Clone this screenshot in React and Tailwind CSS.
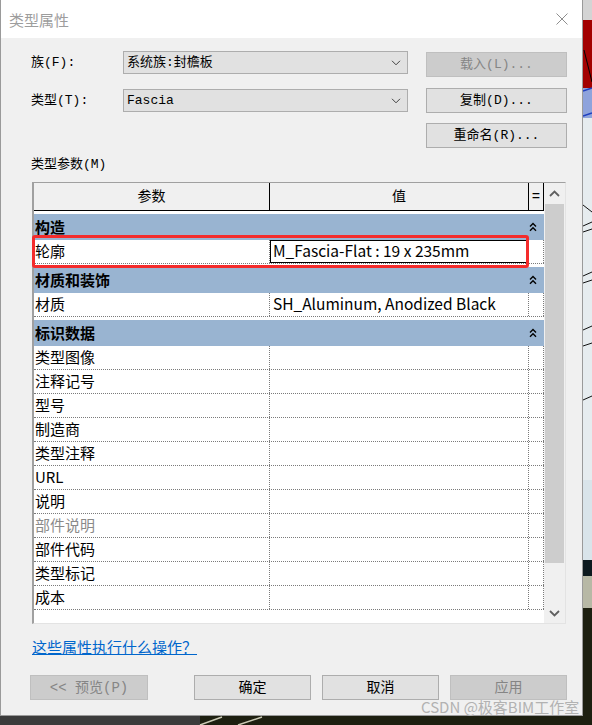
import React from "react";

const ui = "font-['Liberation_Mono','Noto_Sans_CJK_SC',monospace] text-[13px]";
const grid = "font-['Noto_Sans_CJK_SC',sans-serif] text-[15px]";

const dataRows = [
  { label: "类型图像" },
  { label: "注释记号" },
  { label: "型号" },
  { label: "制造商" },
  { label: "类型注释" },
  { label: "URL" },
  { label: "说明" },
  { label: "部件说明", muted: true },
  { label: "部件代码" },
  { label: "类型标记" },
  { label: "成本" },
];

function DownChevron() {
  return (
    <svg width="10" height="6" viewBox="0 0 10 6">
      <path d="M1 0.8 L5 4.8 L9 0.8" fill="none" stroke="#404040" strokeWidth="1" />
    </svg>
  );
}

function Combo({ value, className = "" }) {
  return (
    <div className={`w-[285px] h-[23px] bg-[#e1e1e1] border border-[#adadad] flex items-center pl-[3px] pr-[6px] ${className}`}>
      <span className="flex-1 text-black leading-none">{value}</span>
      <DownChevron />
    </div>
  );
}

function Btn({ children, disabled, className = "" }) {
  return (
    <button
      type="button"
      className={`h-[25px] flex items-center justify-center border leading-none ${
        disabled
          ? "bg-[#cccccc] border-[#bfbfbf] text-[#858585]"
          : "bg-[#e1e1e1] border-[#adadad] text-black"
      } ${className}`}
    >
      {children}
    </button>
  );
}

function DoubleUp() {
  return (
    <svg width="8" height="10" viewBox="0 0 8 10">
      <path d="M1 4.5 L4 1.5 L7 4.5 M1 8.8 L4 5.8 L7 8.8" fill="none" stroke="#000" strokeWidth="1.4" />
    </svg>
  );
}

function ScrollArrow({ up }) {
  return (
    <svg width="11" height="7" viewBox="0 0 11 7">
      <path
        d={up ? "M1 6 L5.5 1.5 L10 6" : "M1 1 L5.5 5.5 L10 1"}
        fill="none"
        stroke="#606060"
        strokeWidth="1.8"
      />
    </svg>
  );
}

function GroupRow({ label }) {
  return (
    <div className="pt-[3px] bg-white">
      <div className="h-[26px] bg-[#99b4d1] flex items-center justify-between pl-[1px] pr-[7px]">
        <span className="font-bold text-black leading-none pb-[2px]">{label}</span>
        <DoubleUp />
      </div>
    </div>
  );
}

function DataRow({ label, value, muted, editing }) {
  return (
    <div className="h-[24px] flex border-b border-dotted border-[#7a7a7a]">
      <div className={`w-[235px] flex items-center pl-[1px] pb-[2px] leading-none ${muted ? "text-[#8a8a8a]" : "text-black"}`}>
        {label}
      </div>
      <div className="w-[259px] flex border-l border-dotted border-[#7a7a7a]">
        {editing ? (
          <div className="flex-1 border border-black flex items-center pl-[2px] pb-[1px] leading-none text-black text-[15.5px]">{value}</div>
        ) : (
          <div className="flex-1 flex items-center pl-[3px] pb-[2px] leading-none text-black text-[15.5px]">{value}</div>
        )}
      </div>
      <div className="w-[16px] border-l border-r border-dotted border-[#7a7a7a]" />
    </div>
  );
}

function RightScene() {
  return (
    <svg width="9" height="716" viewBox="0 0 9 716" className="block shrink-0">
      <rect x="0" y="0" width="9" height="20" fill="#d4d4d4" />
      <rect x="0" y="20" width="9" height="68" fill="#a30000" />
      <path d="M1 50 L9 82" stroke="#000" strokeWidth="1" />
      <rect x="0" y="88" width="9" height="30" fill="#8ea3dc" />
      <path d="M0 91 L9 88 M0 116 L9 113" stroke="#1f3fbf" strokeWidth="1.5" />
      <rect x="0" y="118" width="9" height="362" fill="#e6ecef" />
      <rect x="0" y="480" width="9" height="80" fill="#d9e4ea" />
      <path
        d="M0 205 L9 212 M0 226 L9 222 M0 232 L9 229 M0 276 L9 272 M0 283 L9 280 M0 330 L9 326 M0 346 L9 343 M0 400 L9 396 M2 650 L9 640"
        stroke="#111"
        strokeWidth="1"
        fill="none"
      />
      <rect x="0" y="560" width="9" height="16" fill="#0d1a1f" />
      <rect x="0" y="576" width="9" height="32" fill="#b7b8a5" />
      <rect x="0" y="608" width="9" height="108" fill="#1d1f10" />
    </svg>
  );
}

function BottomScene() {
  return (
    <svg width="592" height="9" viewBox="0 0 592 9" className="block">
      <rect x="0" y="0" width="592" height="9" fill="#1d1f10" />
      <rect x="0" y="0" width="200" height="9" fill="#3b3b3b" />
      <path d="M200 9 L222 1 M238 9 L262 1" stroke="#c9c9b4" strokeWidth="1.5" />
    </svg>
  );
}

export default function App() {
  return (
    <div className="w-[592px] h-[725px] bg-[#1d1f10] flex flex-col relative overflow-hidden">
      <div className="flex h-[716px]">
        {/* dialog */}
        <div className={`w-[583px] h-[716px] bg-[#f0f0f0] border-l border-r border-b border-[#9a9a9a] flex flex-col ${ui}`}>
          {/* title bar */}
          <div className="h-[38px] bg-white flex items-center justify-between pl-[8px] pr-[14px] shrink-0">
            <span className="font-['Noto_Sans_CJK_SC',sans-serif] text-[15px] text-[#9d9d9d] leading-none">类型属性</span>
            <svg width="12" height="12" viewBox="0 0 12 12">
              <path d="M0.5 0.5 L11.5 11.5 M11.5 0.5 L0.5 11.5" stroke="#8e8e8e" strokeWidth="1" />
            </svg>
          </div>

          {/* family row */}
          <div className="mt-[13px] flex items-start pl-[30px]">
            <div className="w-[92px] h-[23px] flex items-center leading-none text-black">族(F):</div>
            <Combo value="系统族:封檐板" />
            <Btn disabled className="w-[141px] ml-[18px] mt-[1px]">载入(L)...</Btn>
          </div>

          {/* type row */}
          <div className="mt-[11px] flex items-start pl-[30px]">
            <div className="w-[92px] h-[23px] mt-[1px] flex items-center leading-none text-black">类型(T):</div>
            <Combo value="Fascia" className="mt-[1px]" />
            <Btn className="w-[141px] ml-[18px]">复制(D)...</Btn>
          </div>

          {/* rename */}
          <div className="mt-[10px] flex pl-[425px]">
            <Btn className="w-[141px]">重命名(R)...</Btn>
          </div>

          <div className="mt-[9px] pl-[30px] h-[16px] leading-[16px] text-black">类型参数(M)</div>

          {/* property grid */}
          <div className={`relative mt-[9px] ml-[31px] w-[534px] h-[442px] border-l-2 border-t border-r border-b border-l-[#a0a0a0] border-t-[#a0a0a0] border-r-[#e3e3e3] border-b-[#e3e3e3] bg-white flex ${grid}`}>
            <div className="w-[510px] flex flex-col">
              <div className="h-[28px] bg-[#f0f0f0] border-b border-black flex font-['Liberation_Mono','Noto_Sans_CJK_SC',monospace] text-[14px] text-black">
                <div className="w-[235px] flex items-center justify-center leading-none">参数</div>
                <div className="w-[259px] border-l border-black flex items-center justify-center leading-none">值</div>
                <div className="w-[16px] border-l border-r border-black flex items-center justify-center leading-none">=</div>
              </div>

              <GroupRow label="构造" />
              <DataRow label="轮廓" value="M_Fascia-Flat : 19 x 235mm" editing />

              <GroupRow label="材质和装饰" />
              <DataRow label="材质" value="SH_Aluminum, Anodized Black" />

              <GroupRow label="标识数据" />
              {dataRows.map((r) => (
                <DataRow key={r.label} label={r.label} muted={r.muted} />
              ))}
            </div>

            {/* scrollbar */}
            <div className="w-[21px] bg-[#f0f0f0] flex flex-col items-center">
              <div className="h-[21px] flex items-center justify-center">
                <ScrollArrow up />
              </div>
              <div className="w-[19px] h-[359px] bg-[#cdcdcd]" />
              <div className="flex-1" />
              <div className="h-[20px] flex items-center justify-center">
                <ScrollArrow />
              </div>
            </div>

            {/* highlight annotation */}
            <div className="absolute left-[-2px] top-[52px] w-[497px] h-[33px] border-[3px] border-[#f42c2c] rounded-[3px] pointer-events-none" />
          </div>

          <div className="mt-[15px] ml-[31px] h-[16px] leading-[16px] font-['Noto_Sans_CJK_SC',sans-serif] text-[15px] text-[#0066cc] underline">
            这些属性执行什么操作？
          </div>

          {/* footer buttons */}
          <div className="mt-[20px] flex pl-[29px]">
            <Btn disabled className="w-[118px] text-[14px]">&lt;&lt; 预览(P)</Btn>
            <Btn className="w-[117px] ml-[46px] text-[14px]">确定</Btn>
            <Btn className="w-[117px] ml-[11px] text-[14px]">取消</Btn>
            <Btn disabled className="w-[117px] ml-[11px] text-[14px]">应用</Btn>
          </div>
        </div>
        <RightScene />
      </div>
      <BottomScene />

      <div className="absolute left-[421px] top-[698px] font-['Noto_Sans_CJK_SC',sans-serif] text-[15px] leading-[18px] text-[#b2b2b2] whitespace-nowrap">
        CSDN @极客BIM工作室
      </div>
    </div>
  );
}
